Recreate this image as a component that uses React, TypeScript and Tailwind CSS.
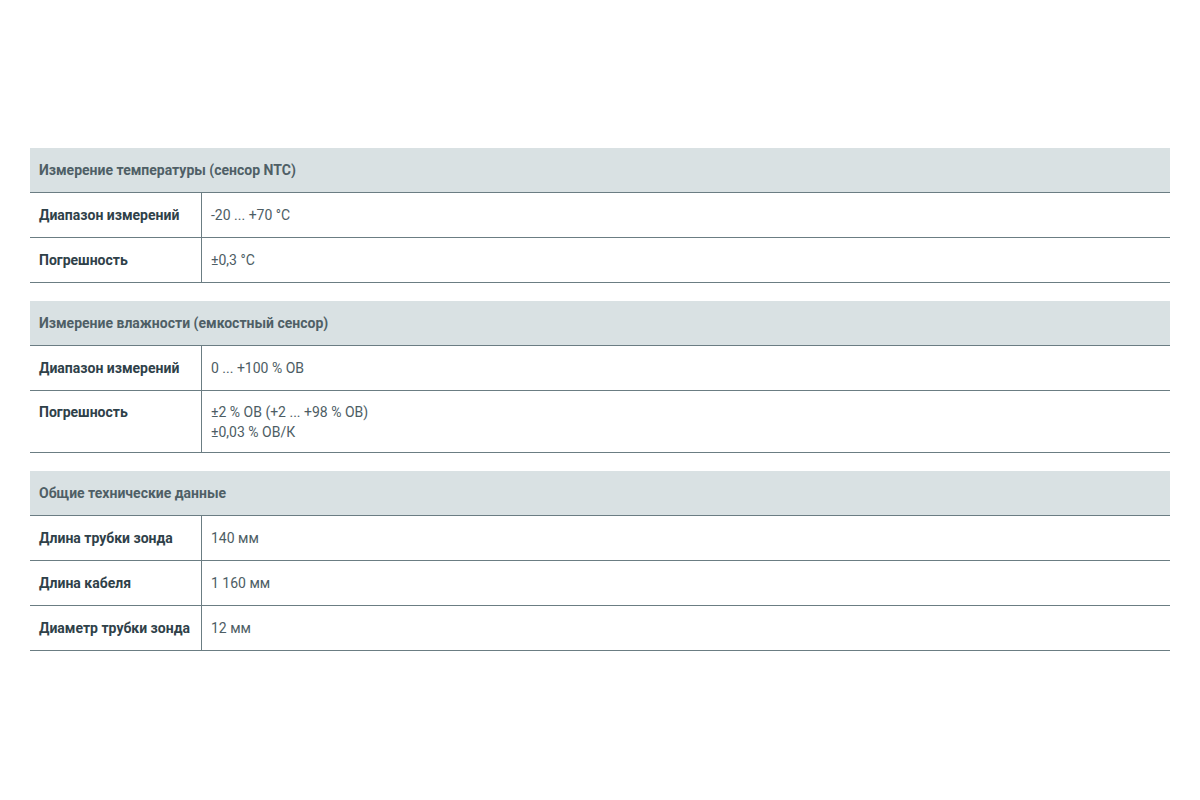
type Row = { label: string; value: string[] }
type Section = { title: string; rows: Row[] }

const sections: Section[] = [
  {
    title: 'Измерение температуры (сенсор NTC)',
    rows: [
      { label: 'Диапазон измерений', value: ['-20 ... +70 °C'] },
      { label: 'Погрешность', value: ['±0,3 °C'] },
    ],
  },
  {
    title: 'Измерение влажности (емкостный сенсор)',
    rows: [
      { label: 'Диапазон измерений', value: ['0 ... +100 % ОВ'] },
      { label: 'Погрешность', value: ['±2 % ОВ (+2 ... +98 % ОВ)', '±0,03 % ОВ/К'] },
    ],
  },
  {
    title: 'Общие технические данные',
    rows: [
      { label: 'Длина трубки зонда', value: ['140 мм'] },
      { label: 'Длина кабеля', value: ['1 160 мм'] },
      { label: 'Диаметр трубки зонда', value: ['12 мм'] },
    ],
  },
]

function SpecTable({ section }: { section: Section }) {
  return (
    <div>
      <div className="h-[45px] border-b border-[#6b7d83] bg-[#d9e1e3] pl-[9px] text-[14px] font-bold leading-[44px] text-[#4f5f66]">
        {section.title}
      </div>
      {section.rows.map((row) => {
        const tall = row.value.length > 1
        return (
          <div key={row.label} className="grid grid-cols-[172px_1fr] border-b border-[#6b7d83] text-[14px] leading-[20px]">
            <div className={`border-r border-[#6b7d83] pl-[9px] font-bold text-[#2f4149] ${tall ? 'pt-[11px] pb-[10px]' : 'py-[12px]'}`}>
              {row.label}
            </div>
            <div className={`pl-[9px] text-[#4d5d64] ${tall ? 'pt-[11px] pb-[10px]' : 'py-[12px]'}`}>
              {row.value.map((v) => (
                <div key={v}>{v}</div>
              ))}
            </div>
          </div>
        )
      })}
    </div>
  )
}

export default function App() {
  return (
    <div className="min-h-[800px] bg-white font-['Roboto',sans-serif]">
      <div className="flex flex-col gap-[18px] px-[30px] pt-[148px]">
        {sections.map((s) => (
          <SpecTable key={s.title} section={s} />
        ))}
      </div>
    </div>
  )
}
